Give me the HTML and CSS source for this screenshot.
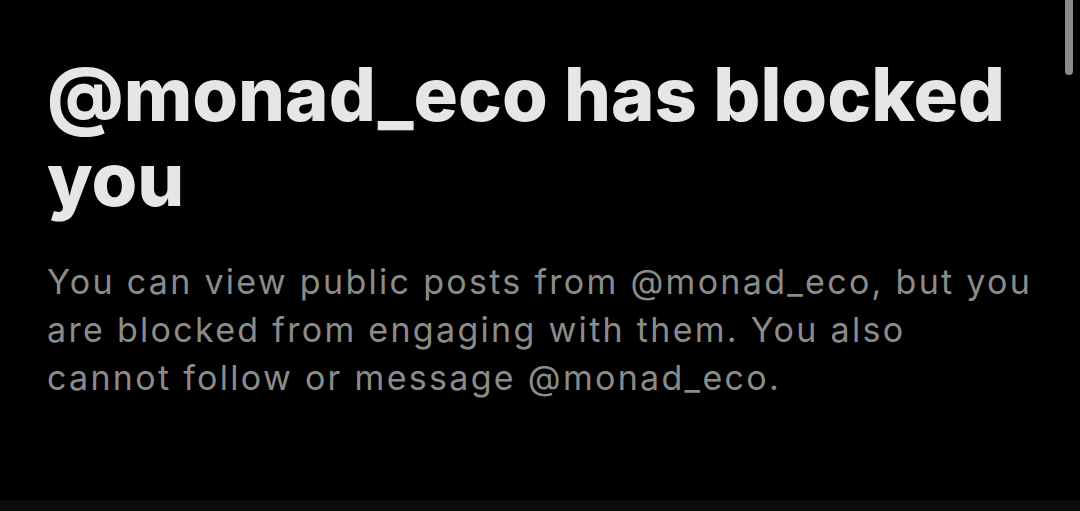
FILE: index.html
```html
<!DOCTYPE html>
<html>
<head>
<meta charset="utf-8">
<link rel="stylesheet" href="styles.css">
</head>
<body>
<div class="page">
  <main class="content">
    <h1 class="title">@monad_eco has blocked you</h1>
    <p class="desc">You can view public posts from @monad_eco, but you are blocked from engaging with them. You also cannot follow or message @monad_eco.</p>
  </main>
  <div class="bottom-bar"></div>
  <div class="scrollbar"></div>
</div>
</body>
</html>
```
FILE: styles.css
```css
html, body {
  margin: 0;
  padding: 0;
  background: #000;
}
.page {
  position: relative;
  width: 1080px;
  height: 511px;
  overflow: hidden;
  display: flex;
  flex-direction: column;
  background: #000;
}
.content {
  flex: 1;
  padding: 52px 0 0 47px;
}
.title {
  margin: 0;
  font-family: Inter, "Liberation Sans", sans-serif;
  font-weight: 800;
  font-size: 74px;
  line-height: 85px;
  letter-spacing: 0;
  color: #e6e6e6;
  width: 1010px;
}
.desc {
  margin: 36px 0 0;
  font-family: Inter, "Liberation Sans", sans-serif;
  font-weight: 400;
  font-size: 34px;
  line-height: 48px;
  letter-spacing: 2.3px;
  color: #8b8b8b;
  width: 986px;
}
.bottom-bar {
  height: 11px;
  background: #0b0b0b;
}
.scrollbar {
  position: absolute;
  top: -6px;
  left: 1065px;
  width: 8px;
  height: 81px;
  border-radius: 4px;
  background: #8a8a8a;
}
```
